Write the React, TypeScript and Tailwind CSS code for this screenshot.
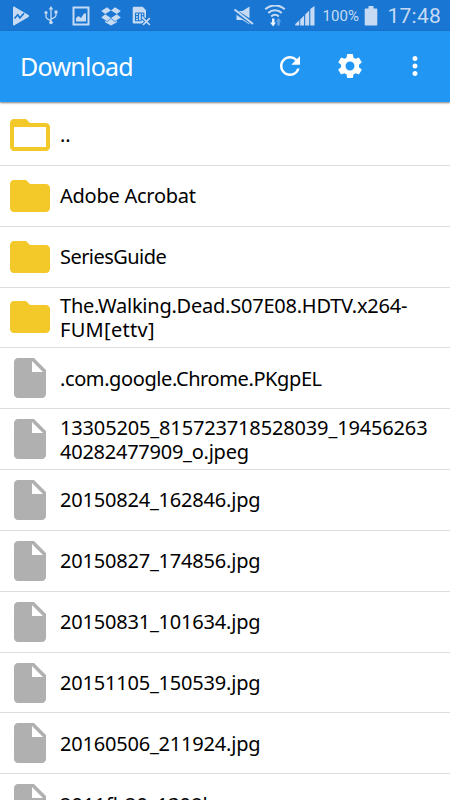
import React from 'react';
import { MdFolder, MdFolderOpen, MdInsertDriveFile, MdMoreVert, MdRefresh, MdSettings } from 'react-icons/md';

type EntryKind = 'parent' | 'folder' | 'file';

interface Line {
  text: string;
  tracking: string;
}

interface Entry {
  kind: EntryKind;
  lines: Line[];
}

const entries: Entry[] = [
  { kind: 'parent', lines: [{ text: '..', tracking: 'tracking-normal' }] },
  { kind: 'folder', lines: [{ text: 'Adobe Acrobat', tracking: 'tracking-[-0.25px]' }] },
  { kind: 'folder', lines: [{ text: 'SeriesGuide', tracking: 'tracking-[-0.55px]' }] },
  {
    kind: 'folder',
    lines: [
      { text: 'The.Walking.Dead.S07E08.HDTV.x264-', tracking: 'tracking-[-0.23px]' },
      { text: 'FUM[ettv]', tracking: 'tracking-[0.3px]' },
    ],
  },
  { kind: 'file', lines: [{ text: '.com.google.Chrome.PKgpEL', tracking: 'tracking-[-0.4px]' }] },
  {
    kind: 'file',
    lines: [
      { text: '13305205_815723718528039_19456263', tracking: 'tracking-[-0.15px]' },
      { text: '40282477909_o.jpeg', tracking: 'tracking-[-0.25px]' },
    ],
  },
  { kind: 'file', lines: [{ text: '20150824_162846.jpg', tracking: 'tracking-[-0.2px]' }] },
  { kind: 'file', lines: [{ text: '20150827_174856.jpg', tracking: 'tracking-[-0.2px]' }] },
  { kind: 'file', lines: [{ text: '20150831_101634.jpg', tracking: 'tracking-[-0.2px]' }] },
  { kind: 'file', lines: [{ text: '20151105_150539.jpg', tracking: 'tracking-[-0.2px]' }] },
  { kind: 'file', lines: [{ text: '20160506_211924.jpg', tracking: 'tracking-[-0.2px]' }] },
  { kind: 'file', lines: [{ text: '2011fb20_1308b', tracking: 'tracking-normal' }] },
];

const NotificationIcons: React.FC = () => (
  <div className="flex gap-2.5">
    {/* Play */}
    <svg className="size-5" viewBox="0 0 20 20">
      <path d="M2 1.600c0-1 .7-1.200 1.500-.8l14 8.300c.8.5.8 1.300 0 1.800l-14 8.300c-.8.4-1.500.2-1.500-.8z" fill="#c6dbf3" />
      <path d="M3.500 12.500l3.200-3.700 2.200 3L13 7.200" fill="none" stroke="#1976d2" strokeWidth="1.700" />
    </svg>
    {/* USB */}
    <svg className="size-5" viewBox="0 0 20 20" fill="none" stroke="#c6dbf3" strokeWidth="1.300">
      <path d="M10 3v14M10 14.500c-3-1-5-1.500-5-4V7M10 13c3-1 5-1.500 5-4V6" />
      <path d="M10 0l2.300 3.500H7.700zM13.500 4.500h3v3h-3z" fill="#c6dbf3" stroke="none" />
      <circle cx="5" cy="6.500" r="1.600" fill="#c6dbf3" stroke="none" />
      <circle cx="10" cy="16.500" r="1.800" fill="#c6dbf3" stroke="none" />
    </svg>
    {/* Picture */}
    <svg className="size-5" viewBox="0 0 20 20">
      <path d="M2.500 1.500h15v17h-15z" fill="none" stroke="#c6dbf3" strokeWidth="2" />
      <path d="M5 15.500V12l2.500-2 2.500 2L13 7.500h2v8z" fill="#c6dbf3" />
    </svg>
    {/* Dropbox */}
    <svg className="size-5" viewBox="0 0 20 20" fill="#c6dbf3">
      <path d="M6 1.200L10 4.500 4.200 8 .2 5zM14 1.200L10 4.500 15.800 8l4-3zM4.200 8.300L10 12l-4 3.200-5.800-3.700zM15.800 8.300L10 12l4 3.200 5.800-3.700zM10 12.800l4 3.200 2-1.200v1.400L10 19.500l-6-3.300v-1.400L6 16z" />
    </svg>
    {/* SIM card missing */}
    <svg className="size-5" viewBox="0 0 20 20">
      <path d="M2.500.8h9.200l3.300 3.500v7.500l-3 .5 1.500 3-1.700 2.200H2.500L1.700 17V1.500z" fill="#c6dbf3" />
      <path d="M4.500 7h8.300M4.500 7v7.700h6M4.500 9.600h3M4.500 12.200h3M7.500 7v7.500M10.300 7v7.500M10.300 9.700h2.500M12.800 7v4" fill="none" stroke="#1976d2" strokeWidth="1.100" />
      <path d="M12 12.200l6.800 6.800M18.800 12.200L12 19" stroke="#1976d2" strokeWidth="3.500" />
      <path d="M12 12.200l6.800 6.800M18.800 12.200L12 19" stroke="#c6dbf3" strokeWidth="1.700" />
    </svg>
  </div>
);

const SystemIcons: React.FC = () => (
  <div className="flex items-center">
    {/* Muted speaker */}
    <svg className="h-5 w-[22px]" viewBox="0 0 22 20">
      <path d="M3.500 5h6l7-4.500v18L9.500 14h-6z" fill="#c6dbf3" />
      <path d="M1 4.500l20 13.500" stroke="#1976d2" strokeWidth="4.500" />
      <path d="M1.500 3.500l18.500 14.500" stroke="#c6dbf3" strokeWidth="2" />
    </svg>
    {/* Wi-Fi with traffic arrows */}
    <svg className="ml-[9px] h-[22px] w-[22px]" viewBox="0 0 22 22">
      <g fill="none" stroke="#c6dbf3" strokeWidth="2.100">
        <path d="M1.300 4.300a14 14 0 0 1 19.400 0" />
        <path d="M4.300 8a9.700 9.700 0 0 1 13.400 0" />
        <path d="M7.200 11.400a5.500 5.500 0 0 1 7.600 0" />
      </g>
      <path d="M8 13.500h2.500v4H12L9.200 21.500 6 17.500h2z" fill="#e8f3ff" />
      <path d="M13.200 20.500v-4h-1.400l2.700-3.800 2.700 3.800h-1.400v4z" fill="#64a5e6" />
    </svg>
    {/* Signal */}
    <svg className="ml-[9px] h-5 w-5" viewBox="0 0 20 20" fill="#c6dbf3">
      <path d="M.3 19.500v-1.500L4.300 14.200v5.300zM5.200 19.500v-6L9.100 9.500v10zM10.200 19.500V8.500L14.200 4.500v15zM15.300 19.500V3L19.500 0v19.500z" />
    </svg>
    <span className="ml-[7px] w-[42px] text-[15px] leading-5 tracking-[0.1px] text-[#c6dbf3]">100%</span>
    {/* Battery */}
    <svg className="h-5 w-[14px]" viewBox="0 0 14 20" fill="#c6dbf3">
      <path d="M4.500 0h5v2.500h3q.8 0 .8.800v15.400q0 .8-.8.800h-11q-.8 0-.8-.8V3.300q0-.8.8-.8h3z" />
    </svg>
    <span className="ml-[9px] pt-0.5 text-[21px] leading-[29px] tracking-[0.25px] text-[#c6dbf3]">17:48</span>
  </div>
);

const EntryIcon: React.FC<{ kind: EntryKind }> = ({ kind }) => {
  if (kind === 'parent') {
    return <MdFolderOpen size={48} color="#f3c829" />;
  }
  if (kind === 'folder') {
    return <MdFolder size={48} color="#f3c829" />;
  }
  return <MdInsertDriveFile size={48} color="#b0b0b0" />;
};

const EntryRow: React.FC<{ entry: Entry }> = ({ entry }) => (
  <li className="flex h-[60.85px] shrink-0 items-center gap-1.5 border-b border-[#dedede] pl-1.5">
    <EntryIcon kind={entry.kind} />
    <div className="pt-px text-[20px] leading-6 whitespace-nowrap text-black">
      {entry.lines.map((line) => (
        <div key={line.text} className={line.tracking}>
          {line.text}
        </div>
      ))}
    </div>
  </li>
);

export default function App() {
  return (
    <div className="flex h-[800px] w-[450px] flex-col overflow-hidden bg-white font-['Noto_Sans',sans-serif]">
      <div className="flex h-[31px] shrink-0 items-center justify-between bg-[#1976d2] pr-[9px] pl-[11px] font-[Roboto,sans-serif]">
        <NotificationIcons />
        <SystemIcons />
      </div>

      <header className="z-10 flex h-[71px] shrink-0 items-center bg-[#2196f3] px-5 pb-px text-white shadow-[0_1px_2px_rgba(0,0,0,0.5)]">
        <h1 className="grow text-[25px] leading-8 tracking-[-0.75px]">Download</h1>
        <MdRefresh size={30} />
        <MdSettings size={30} className="ml-[30px]" />
        <MdMoreVert size={30} className="ml-[35px]" />
      </header>

      <ul className="mt-[3px] flex flex-col">
        {entries.map((entry) => (
          <EntryRow key={entry.lines[0].text} entry={entry} />
        ))}
      </ul>
    </div>
  );
}
